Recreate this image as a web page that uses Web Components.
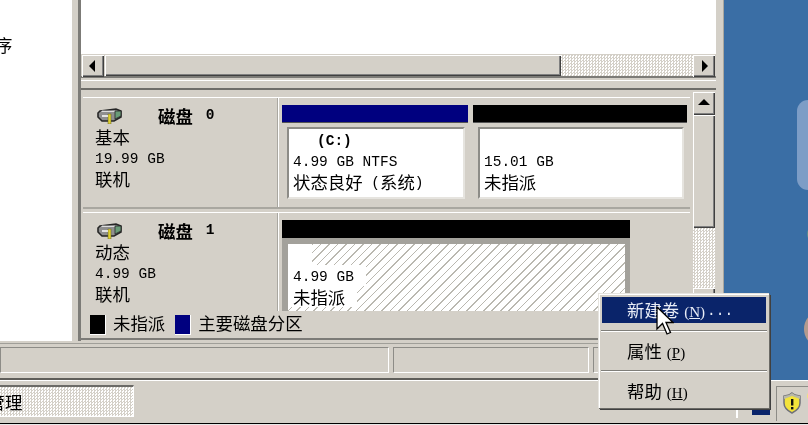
<!DOCTYPE html>
<html lang="zh">
<head>
<meta charset="utf-8">
<title>磁盘管理</title>
<style>
html,body{margin:0;padding:0;background:#fff}
body{font:17.4px/21px "Noto Sans CJK SC","Liberation Sans",sans-serif;color:#000}
disk-head>div,disk-part>div{height:21px}
</style>
</head>
<body>
<win-desktop>
  <mmc-window slot="window">
    <left-pane slot="left">序</left-pane>
    <h-scroll slot="list"></h-scroll>
    <disk-row slot="disks" style="--parts:412px">
      <disk-head name="0"><div>基本</div><div><l-t>19.99 GB</l-t></div><div>联机</div></disk-head>
      <disk-part slot="parts" color="#00007f" style="--w:186px"><div class="b"><b-t>(C:)</b-t></div><div><l-t>4.99 GB NTFS</l-t></div><div>状态良好<l-t>&nbsp;(</l-t>系统<l-t>)</l-t></div></disk-part>
      <disk-part slot="parts" color="#000" style="--w:214px"><div>&nbsp;</div><div><l-t>15.01 GB</l-t></div><div>未指派</div></disk-part>
    </disk-row>
    <disk-row slot="disks" style="--parts:358px">
      <disk-head name="1"><div>动态</div><div><l-t>4.99 GB</l-t></div><div>联机</div></disk-head>
      <hatch-part slot="parts"><l-t>4.99 GB</l-t><span slot="second">未指派</span></hatch-part>
    </disk-row>
    <legend-bar slot="legend"></legend-bar>
    <status-bar slot="status"></status-bar>
  </mmc-window>
  <task-bar slot="taskbar">理</task-bar>
  <ctx-menu slot="overlay">
    <menu-item active>新建卷<l-k>(<u>N</u>)</l-k><l-t>...</l-t></menu-item>
    <menu-sep style="height:15px"></menu-sep>
    <menu-item>属性<l-k>(<u>P</u>)</l-k></menu-item>
    <menu-sep style="height:14px"></menu-sep>
    <menu-item>帮助<l-k>(<u>H</u>)</l-k></menu-item>
  </ctx-menu>
  <mouse-cursor slot="overlay"></mouse-cursor>
</win-desktop>
<script>
function def(name, css, html, extra){
  const tpl=document.createElement('template');
  tpl.innerHTML='<style>'+css+'</style>'+html;
  customElements.define(name,class extends HTMLElement{
    constructor(){super();this.attachShadow({mode:'open'}).appendChild(tpl.content.cloneNode(true));}
    connectedCallback(){ if(extra) extra(this); }
  });
}
const G='#d4d0c8';
const DITHER='repeating-conic-gradient(#d4d0c8 0 25%,#fff 0 50%) 0 0/3px 3px';
const BEVEL='box-sizing:border-box;background:'+G+';box-shadow:inset 1px 1px 0 #fff,inset -1px -1px 0 #404040,inset -2px -2px 0 #808080;';
const tri=(p)=>'<svg width="22" height="22" viewBox="0 0 22 22" style="display:block"><polygon points="'+p+'" fill="#000"/></svg>';

def('l-t',':host{display:inline;font:14.5px/0 "Liberation Mono","DejaVu Sans Mono",monospace;vertical-align:2px}','<slot></slot>');
def('b-t',':host{display:inline;font:bold 14.5px/0 "Liberation Mono","DejaVu Sans Mono",monospace;vertical-align:2px}','<slot></slot>');
def('l-k',':host{display:inline;font:15px/0 "Liberation Serif","DejaVu Serif",serif;margin-left:5px;margin-right:2px}','<slot></slot>');

def('win-desktop',
 ':host{display:block;position:relative;width:808px;height:425px;overflow:hidden;background:#e8e8e8;filter:blur(.55px)}'+
 '.top{display:flex;height:380px}'+
 '.wall{flex:1;position:relative;overflow:hidden;background:#3a6ea5}'+
 '.d1{position:absolute;left:73px;top:100px;width:40px;height:90px;border-radius:11px;background:#7d9dc6}'+
 '.d2{position:absolute;left:80px;top:312px;width:30px;height:34px;border-radius:50%;background:#b39a8e}'+
 '.d3{position:absolute;left:83px;top:228px;width:8px;height:12px;border-radius:50%;background:#5f8f8c}'+
 '.line{height:1px;background:#000}',
 '<div class="top"><slot name="window"></slot><div class="wall"><div class="d1"></div><div class="d2"></div><div class="d3"></div></div></div>'+
 '<slot name="taskbar"></slot><div class="line"></div><slot name="overlay"></slot>');

def('mmc-window',
 ':host{display:block;width:724px;height:380px;background:'+G+';box-sizing:border-box;border-right:1px solid #a8a69f}'+
 '.main{display:flex;height:343px;align-items:flex-start}'+
 '.sp{width:6px;align-self:stretch}'+
 '.col{width:638px;height:341px;box-sizing:border-box;border-left:3px solid #7c7b77;display:flex;flex-direction:column}'+
 '.list{height:54px;background:#fff;flex:none}'+
 '.split{height:12px;flex:none;background:linear-gradient(#d4d0c8 0 2px,#fff 2px 3px,#d4d0c8 3px 10px,#6e6d69 10px 12px)}'+
 '.region{height:221px;flex:none;display:flex;overflow:hidden}'+
 '.disks{width:612px;flex:none;padding:7px 0 0 2px;box-sizing:border-box;display:flex;flex-direction:column;gap:3px}',
 '<div class="main"><slot name="left"></slot><div class="sp"></div><div class="col">'+
 '<div class="list"></div><slot name="list"></slot><div class="split"></div>'+
 '<div class="region"><div class="disks"><slot name="disks"></slot></div><v-scroll></v-scroll></div>'+
 '<slot name="legend"></slot></div></div><slot name="status"></slot>');

def('left-pane',':host{display:block;width:72px;height:341px;background:#fff;overflow:hidden;box-sizing:border-box;padding-top:34px;text-indent:-5px}','<slot></slot>');

def('h-scroll',
 ':host{display:flex;height:24px;flex:none;box-sizing:border-box;padding:1px 1px 0 1px;border-bottom:2px solid #7c7b77;width:635px}'+
 '.b{width:22px;height:22px;flex:none;'+BEVEL+'}'+
 '.t{width:456px;margin-left:1px;height:21px;'+BEVEL+'}'+
 '.d{flex:1;height:21px;background:'+DITHER+'}',
 '<div class="b">'+tri('7,11 13,5 13,17')+'</div><div class="t"></div><div class="d"></div><div class="b">'+tri('9,5 15,11 9,17')+'</div>');

def('v-scroll',
 ':host{display:flex;flex-direction:column;width:22px;flex:none;margin-top:2px}'+
 '.b{width:22px;height:23px;flex:none;'+BEVEL+'}'+
 '.t{height:113px;flex:none;'+BEVEL+'}'+
 '.d{flex:1;background:'+DITHER+'}',
 '<div class="b">'+tri('11,7 17,13 5,13')+'</div><div class="t"></div><div class="d"></div><div class="b">'+tri('5,9 17,9 11,15')+'</div>');

def('disk-row',
 ':host{display:flex;width:607px;height:112px;flex:none;box-sizing:border-box;border-top:1px solid #fff;border-bottom:2px solid #a9a7a0;background:'+G+'}'+
 '.parts{display:flex;gap:5px;width:var(--parts);flex:none;box-sizing:border-box;padding:7px 0 0 3px;border-left:1px solid #fff;align-items:flex-start}',
 '<slot></slot><div class="parts"><slot name="parts"></slot></div>');

def('disk-head',
 ':host{display:block;width:195px;flex:none;box-sizing:border-box;padding:7px 0 0 12px;border-right:1px solid #a9a7a0;white-space:nowrap}'+
 '.h{display:flex;align-items:center;height:21px}'+
 'svg{display:block;width:25px;height:16px;margin:1px 36px 0 2px}'+
 '.t{font-weight:700;font-size:17.4px}'+
 '.n{font:bold 14.5px/21px "Liberation Mono","DejaVu Sans Mono",monospace;margin-left:13px}',
 '<div class="h"><svg viewBox="0 0 25 16"><path d="M3 3 L19 1 L24 3 V9 L17 13 H5 L1 9 V5 Z" fill="#8f8f8f" stroke="#262626" stroke-width="1.6"/><path d="M4 4 H19 L21 3 L5 2.5 Z" fill="#dcdcdc"/><path d="M18 3 L24 3 V8 L18 11 Z" fill="#6a9c78" stroke="#262626" stroke-width=".8"/><rect x="11" y="6" width="3" height="10" fill="#e0d233" stroke="#5b5a20" stroke-width=".5"/><path d="M5 8 H11" stroke="#fff" stroke-width="1.5"/></svg><span class="t">磁盘</span><span class="n"></span></div><slot></slot>',
 el=>{el.shadowRoot.querySelector('.n').textContent=el.getAttribute('name');});

def('disk-part',
 ':host{display:block;width:var(--w);flex:none}'+
 '.bar{height:18px;box-shadow:inset 0 -1px 0 #555}'+
 '.box{height:72px;margin:4px 3px 0 5px;box-sizing:border-box;background:#fff;border:2px solid;border-color:#8d8c87 #e6e4df #e6e4df #8d8c87;padding:0 0 0 4px;white-space:nowrap}',
 '<div class="bar"></div><div class="box"><slot></slot></div>',
 el=>{el.shadowRoot.querySelector('.bar').style.background=el.getAttribute('color');
      const f=el.querySelector('.b'); if(f) f.style.paddingLeft='24px';});

def('hatch-part',
 ':host{display:block;width:348px;flex:none}'+
 '.bar{height:18px;background:#000}'+
 '.box{height:120px;box-sizing:border-box;border:solid #a3a19b;border-width:6px 5px 0 6px;'+
 'background:repeating-linear-gradient(135deg,#fff 0 4.9px,#bab8b0 4.9px 6px);white-space:nowrap}'+
 '.w{background:#fff;display:block;height:21px;width:fit-content;padding:0 12px 0 5px}'+
 '.w0{width:24px;height:21px;padding:0}',
 '<div class="bar"></div><div class="box"><div class="w w0"></div><div class="w"><slot></slot></div><div class="w"><slot name="second"></slot></div></div>');

def('legend-bar',
 ':host{display:flex;align-items:center;height:29px;flex:none;box-sizing:border-box;padding:0 0 2px 9px;border-bottom:2px solid #7c7b77;background:'+G+';white-space:nowrap}'+
 '.s{width:15px;height:19px;margin-top:3px;border:1px solid #fff;border-width:0 1px 1px 0;flex:none}'+
 '.l{margin:-2px 10px 0 7px}',
 '<span class="s" style="background:#000"></span><span class="l">未指派</span><span class="s" style="background:#00007f"></span><span class="l">主要磁盘分区</span>');

def('status-bar',
 ':host{display:flex;height:37px;box-sizing:border-box;padding:3px 0 5px;margin:0;border-top:1px solid #a09f99;border-bottom:2px solid #5f5e5a;gap:4px}'+
 'i{display:block;box-sizing:border-box;border:1px solid;border-color:#8d8c87 #fff #fff #8d8c87}',
 '<i style="width:389px"></i><i style="width:196px"></i><i style="flex:1"></i>');

def('task-bar',
 ':host{display:flex;height:43px;box-sizing:border-box;border-top:1px solid #fff;background:'+G+';align-items:flex-start;overflow:hidden}'+
 '.btn{width:134px;height:32px;margin-top:4px;flex:none;box-sizing:border-box;background:'+DITHER+';border-top:2px solid #6b6a66;border-right:1px solid #fff;border-bottom:1px solid #fff;overflow:hidden;white-space:nowrap;line-height:30px;text-indent:-12.5px}'+
 '.q{margin:29px 0 0 auto;width:2px;height:8px;background:#fff;flex:none}'+
 '.sq{margin:28px 6px 0 14px;width:18px;height:6px;background:#0a246a;flex:none}'+
 '.tray{margin-top:5px;width:32px;height:35px;flex:none;box-sizing:border-box;border:solid #8d8c87;border-width:1px 0 0 1px;padding:5px 0 0 5px;display:flex;gap:3px;overflow:hidden}'+
 'svg{display:block;flex:none}',
 '<div class="btn"><span>管</span><slot></slot></div><div class="q"></div><div class="sq"></div>'+
 '<div class="tray"><svg width="20" height="22" viewBox="0 0 20 22"><path d="M10 1 L13 3 L18 4 V11 C18 16 14 19 10 21 C6 19 2 16 2 11 V4 L7 3 Z" fill="#f3e33a" stroke="#6f7078" stroke-width="1.5"/><path d="M10 1 L13 3 L18 4 V7 L10 4 L2 7 V4 L7 3 Z" fill="#b9b9a8"/><rect x="9" y="7" width="2.4" height="6.5" fill="#111"/><rect x="9" y="15" width="2.4" height="2.4" fill="#111"/></svg>'+
 '<svg width="10" height="10" viewBox="0 0 10 10"><circle cx="7" cy="4" r="5" fill="#f6e07a"/></svg></div>');

def('ctx-menu',
 ':host{position:absolute;left:598px;top:293px;width:171px;height:115px;box-sizing:border-box;padding:4px 3px 4px 4px;background:'+G+';box-shadow:inset 1px 1px 0 #e6e4df,inset 2px 2px 0 #fff,1px 1px 0 #6b6a66,2px 2px 0 #404040;white-space:nowrap}',
 '<slot></slot>');
def('menu-item',
 ':host{display:block;height:26px;line-height:25px;padding-left:25px;color:#000}'+
 ':host([active]){background:#0a246a;color:#e8ecf6}',
 '<slot></slot>');
def('menu-sep',
 ':host{display:flex;align-items:center;margin:0 -1px}'+
 'i{display:block;width:100%;height:2px;background:linear-gradient(#7f7e79 0 1px,#fff 1px 2px)}',
 '<i></i>');
def('mouse-cursor',
 ':host{position:absolute;left:656px;top:306px;width:18px;height:30px;display:block}svg{display:block}',
 '<svg width="18" height="30" viewBox="0 0 18 30"><path d="M1 1 V23 L6.5 17.5 L11 28 L14.5 26.5 L10 16.5 H17 Z" fill="#fff" stroke="#000" stroke-width="1.3" stroke-linejoin="miter"/></svg>');
</script>
</body>
</html>
